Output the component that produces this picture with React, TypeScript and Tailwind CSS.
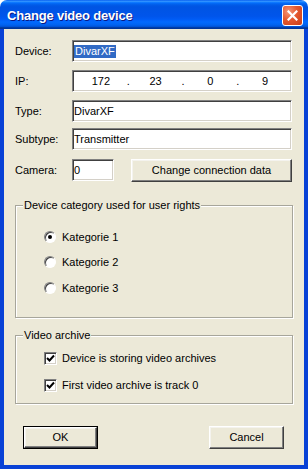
import React from 'react';

const sunken =
  'border border-t-[#808080] border-l-[#808080] border-b-white border-r-white shadow-[inset_1px_1px_0_#404040,inset_-1px_-1px_0_#d4d0c8]';
const raised =
  'border border-t-white border-l-white border-b-[#404040] border-r-[#404040] shadow-[inset_-1px_-1px_0_#808080,inset_1px_1px_0_#f4f3ee] bg-[#ECE9D8]';

const Field = ({ label, children, mt }: { label: string; children: React.ReactNode; mt: string }) => (
  <div className={`flex items-center ${mt}`}>
    <div className="w-[57px]">{label}</div>
    <div className={`w-[220px] h-[22px] bg-white flex items-center pl-[1px] ${sunken}`}>{children}</div>
  </div>
);

const Radio = ({ checked, label, mt }: { checked?: boolean; label: string; mt: string }) => (
  <div className={`flex items-center h-[14px] ${mt}`}>
    <div className="w-[12px] h-[12px] rounded-full bg-white border border-t-[#808080] border-l-[#808080] border-b-white border-r-white shadow-[inset_1px_1px_0_#404040] flex items-center justify-center">
      {checked && <div className="w-[4px] h-[4px] rounded-full bg-black" />}
    </div>
    <span className="ml-[6px]">{label}</span>
  </div>
);

const Check = ({ label, mt }: { label: string; mt: string }) => (
  <div className={`flex items-center h-[14px] ${mt}`}>
    <div className={`w-[13px] h-[13px] bg-white flex items-center justify-center ${sunken}`}>
      <svg width="9" height="9" viewBox="0 0 9 9">
        <polyline points="1,4 3.5,6.5 8,1.5" fill="none" stroke="#000" strokeWidth="2" />
      </svg>
    </div>
    <span className="ml-[5px]">{label}</span>
  </div>
);

const Group = ({ title, h, mt, children }: { title: string; h: string; mt: string; children: React.ReactNode }) => (
  <div
    className={`relative w-[278px] ${h} ${mt} border border-[#a7a69b] shadow-[1px_1px_0_#fff,inset_1px_1px_0_#fff] pl-[28px]`}
  >
    <span className="absolute left-[7px] -top-[8px] px-[1px] bg-[#ECE9D8] leading-[14px]">{title}</span>
    {children}
  </div>
);

export default function App() {
  return (
    <div className="w-[308px] h-[469px] bg-white flex flex-col font-['Liberation_Sans',Arial,sans-serif] text-[11px] text-black">
      {/* title bar */}
      <div className="h-[29px] rounded-t-[7px] flex items-center justify-between pl-[7px] pr-[5px] pt-[2px] bg-[linear-gradient(to_bottom,#0058ee_0%,#3593ff_4%,#288eff_6%,#127dff_8%,#036ffc_10%,#0262ee_14%,#0057e5_20%,#0054e3_24%,#0055eb_56%,#005bf5_66%,#026afe_76%,#0062ef_86%,#0052d6_92%,#0040ab_94%,#003092_100%)]">
        <span className="text-white font-bold text-[13px] tracking-[-0.2px] [text-shadow:1px_1px_0_#0a1883]">
          Change video device
        </span>
        <div className="w-[21px] h-[21px] rounded-[3px] border border-white flex items-center justify-center bg-[radial-gradient(circle_at_30%_30%,#f3977a_0%,#e4582f_45%,#c93c16_100%)]">
          <svg width="11" height="11" viewBox="0 0 11 11">
            <path d="M1.5 1.5 L9.5 9.5 M9.5 1.5 L1.5 9.5" stroke="#fff" strokeWidth="2.2" strokeLinecap="square" />
          </svg>
        </div>
      </div>

      {/* body */}
      <div className="flex-1 flex flex-col bg-[#ECE9D8] border-x-4 border-b-4 border-[#0841d6] pl-[11px]">
        <Field label="Device:" mt="mt-[11px]">
          <span className="bg-[#316AC5] text-white px-[1px] leading-[13px]">DivarXF</span>
        </Field>
        <Field label="IP:" mt="mt-[8px]">
          <div className="flex w-full pl-[1px]">
            <span className="w-[52px] text-center">172</span>
            <span className="w-[3px] text-center">.</span>
            <span className="w-[52px] text-center">23</span>
            <span className="w-[3px] text-center">.</span>
            <span className="w-[52px] text-center">0</span>
            <span className="w-[3px] text-center">.</span>
            <span className="w-[52px] text-center">9</span>
          </div>
        </Field>
        <Field label="Type:" mt="mt-[8px]">
          <span>DivarXF</span>
        </Field>
        <Field label="Subtype:" mt="mt-[6px]">
          <span>Transmitter</span>
        </Field>
        <div className="flex items-start mt-[9px]">
          <div className="w-[57px] h-[22px] flex items-center">Camera:</div>
          <div className={`w-[42px] h-[22px] bg-white flex items-center pl-[1px] ${sunken}`}>0</div>
          <button className={`ml-[17px] w-[161px] h-[23px] flex items-center justify-center ${raised}`}>
            Change connection data
          </button>
        </div>

        <Group title="Device category used for user rights" h="h-[113px]" mt="mt-[23px]">
          <Radio checked label="Kategorie 1" mt="mt-[24px]" />
          <Radio label="Kategorie 2" mt="mt-[11px]" />
          <Radio label="Kategorie 3" mt="mt-[12px]" />
        </Group>

        <Group title="Video archive" h="h-[69px]" mt="mt-[17px]">
          <Check label="Device is storing video archives" mt="mt-[15px]" />
          <Check label="First video archive is track 0" mt="mt-[13px]" />
        </Group>

        <div className="flex justify-between mt-[22px] pl-[8px] pr-[20px]">
          <button className="w-[75px] h-[23px] border border-black">
            <div className={`w-full h-full flex items-center justify-center ${raised}`}>OK</div>
          </button>
          <button className={`w-[75px] h-[23px] flex items-center justify-center ${raised}`}>Cancel</button>
        </div>
      </div>
    </div>
  );
}
